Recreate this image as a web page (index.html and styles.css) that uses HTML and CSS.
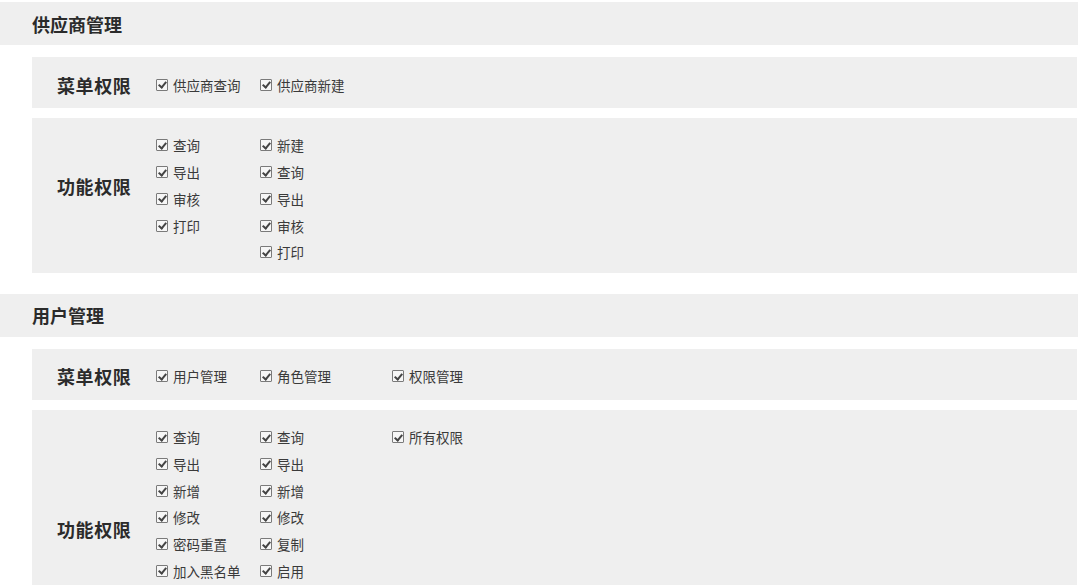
FILE: index.html
```html
<!DOCTYPE html>
<html lang="zh">
<head>
<meta charset="utf-8">
<title>权限管理</title>
<link rel="stylesheet" href="styles.css">
</head>
<body>
<div class="page">
  <section class="module">
    <div class="module-title">供应商管理</div>
    <div class="perm-row menu-row">
      <div class="perm-label">菜单权限</div>
      <div class="cols">
        <div class="col col-a"><label class="item"><span class="cb"></span>供应商查询</label></div>
        <div class="col col-b"><label class="item"><span class="cb"></span>供应商新建</label></div>
      </div>
    </div>
    <div class="perm-row func-row">
      <div class="perm-label label-1">功能权限</div>
      <div class="cols">
        <div class="col col-a">
          <label class="item"><span class="cb"></span>查询</label>
          <label class="item"><span class="cb"></span>导出</label>
          <label class="item"><span class="cb"></span>审核</label>
          <label class="item"><span class="cb"></span>打印</label>
        </div>
        <div class="col col-b">
          <label class="item"><span class="cb"></span>新建</label>
          <label class="item"><span class="cb"></span>查询</label>
          <label class="item"><span class="cb"></span>导出</label>
          <label class="item"><span class="cb"></span>审核</label>
          <label class="item"><span class="cb"></span>打印</label>
        </div>
      </div>
    </div>
  </section>

  <section class="module module-2">
    <div class="module-title">用户管理</div>
    <div class="perm-row menu-row">
      <div class="perm-label">菜单权限</div>
      <div class="cols">
        <div class="col col-a"><label class="item"><span class="cb"></span>用户管理</label></div>
        <div class="col col-b"><label class="item"><span class="cb"></span>角色管理</label></div>
        <div class="col col-c"><label class="item"><span class="cb"></span>权限管理</label></div>
      </div>
    </div>
    <div class="perm-row func-row">
      <div class="perm-label label-2">功能权限</div>
      <div class="cols">
        <div class="col col-a">
          <label class="item"><span class="cb"></span>查询</label>
          <label class="item"><span class="cb"></span>导出</label>
          <label class="item"><span class="cb"></span>新增</label>
          <label class="item"><span class="cb"></span>修改</label>
          <label class="item"><span class="cb"></span>密码重置</label>
          <label class="item"><span class="cb"></span>加入黑名单</label>
        </div>
        <div class="col col-b">
          <label class="item"><span class="cb"></span>查询</label>
          <label class="item"><span class="cb"></span>导出</label>
          <label class="item"><span class="cb"></span>新增</label>
          <label class="item"><span class="cb"></span>修改</label>
          <label class="item"><span class="cb"></span>复制</label>
          <label class="item"><span class="cb"></span>启用</label>
        </div>
        <div class="col col-c">
          <label class="item"><span class="cb"></span>所有权限</label>
        </div>
      </div>
    </div>
  </section>
</div>
</body>
</html>
```

FILE: styles.css
```css
html, body {
  margin: 0;
  padding: 0;
  background: #ffffff;
  overflow: hidden;
}

body {
  font-family: "Noto Sans CJK SC", "Noto Sans", sans-serif;
  color: #333333;
  width: 1080px;
  height: 585px;
}

.page {
  padding-top: 2px;
}

.module-2 {
  margin-top: 21px;
}

.module-title {
  height: 43px;
  margin-right: 2px;
  padding-left: 32px;
  background: #efefef;
  display: flex;
  align-items: center;
  font-size: 18px;
  font-weight: 700;
  color: #2b2b2b;
}

.perm-row {
  margin-left: 32px;
  margin-right: 3px;
  background: #efefef;
  display: flex;
}

.menu-row {
  margin-top: 12px;
  height: 51px;
  box-sizing: border-box;
  padding-top: 14px;
  padding-bottom: 10px;
  align-items: center;
}

.func-row {
  margin-top: 10px;
  padding-top: 14px;
  padding-bottom: 7px;
  align-items: flex-start;
}

.perm-label {
  width: 124px;
  box-sizing: border-box;
  padding-left: 25px;
  font-size: 18px;
  line-height: 26px;
  font-weight: 700;
  letter-spacing: 0.6px;
  color: #2b2b2b;
  white-space: nowrap;
}

.label-1 {
  margin-top: 41px;
}

.label-2 {
  margin-top: 92px;
}

.cols {
  display: flex;
  align-items: flex-start;
}

.col {
  display: flex;
  flex-direction: column;
}

.col-a { width: 104px; }
.col-b { width: 132px; }
.col-c { width: 120px; }

.item {
  height: 26.75px;
  display: flex;
  align-items: center;
  font-size: 13.5px;
  color: #3a3a3a;
  white-space: nowrap;
}

.cb {
  position: relative;
  width: 10px;
  height: 10px;
  margin-right: 5px;
  border: 1px solid #7a7a7a;
  background: #f6f6f6;
  border-radius: 1px;
  flex: none;
}

.cb::after {
  content: "";
  position: absolute;
  left: 3px;
  top: 0.5px;
  width: 3px;
  height: 6px;
  border-right: 2px solid #444444;
  border-bottom: 2px solid #444444;
  transform: rotate(40deg);
}
```
